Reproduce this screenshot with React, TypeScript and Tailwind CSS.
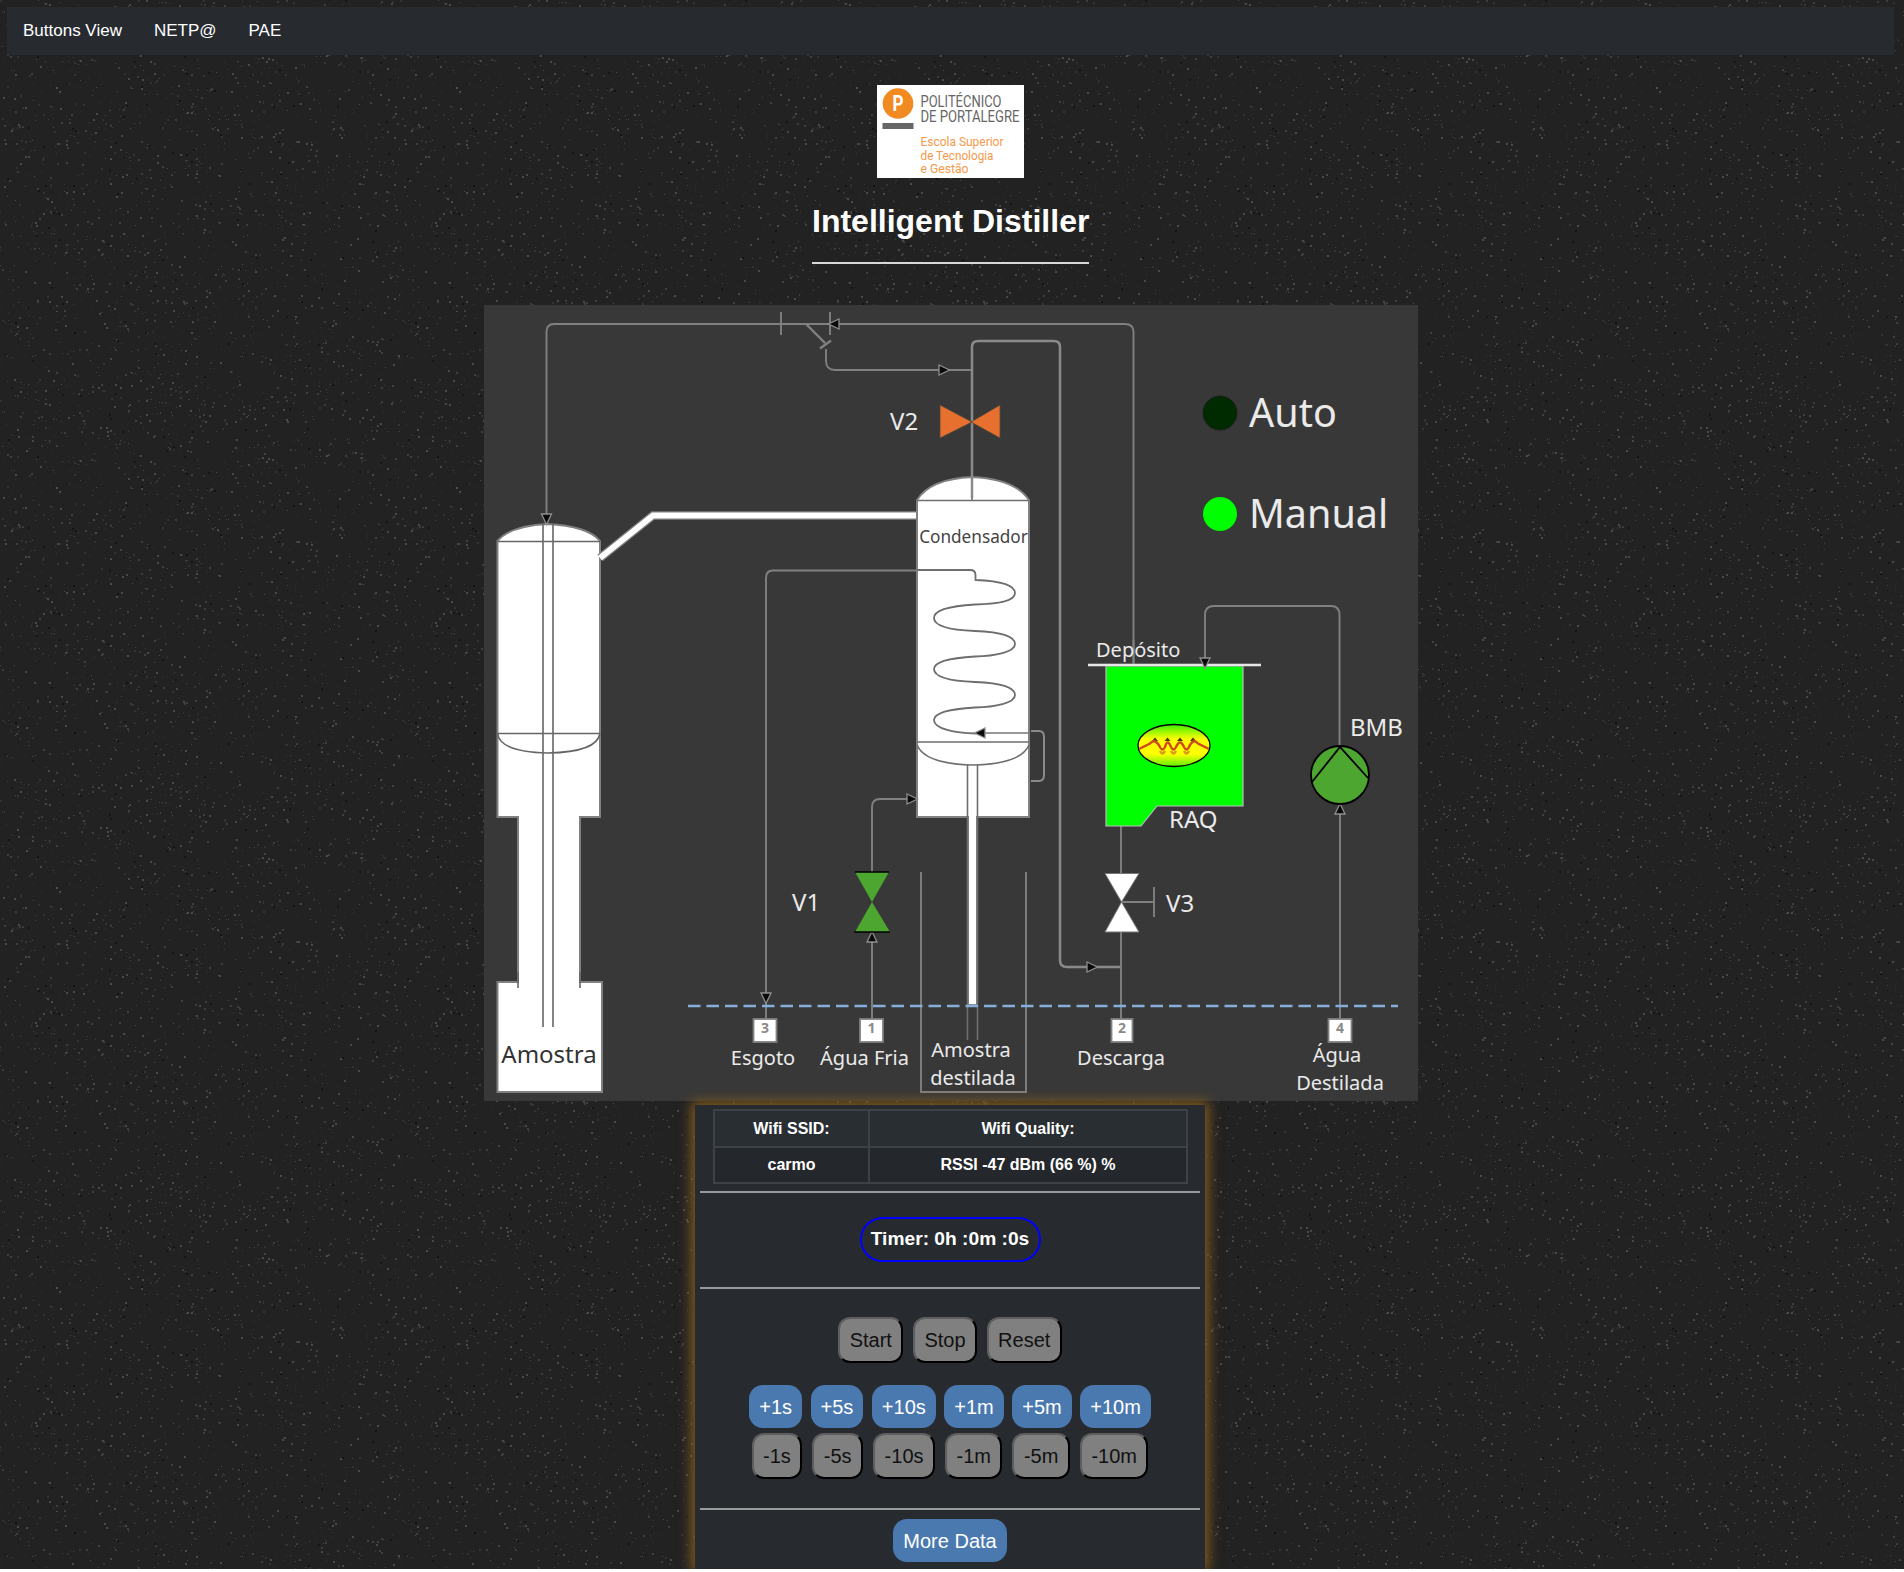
import * as React from "react";

const SANS = "font-['Liberation_Sans',Arial,sans-serif]";
const PIPE = "#808080";

// speckle for the page background, seeded so it stays the same on each load
function makeSpeckle() {
  let seed = 1337;
  const rnd = () => {
    seed = (seed * 16807) % 2147483647;
    return seed / 2147483647;
  };
  const dots: { x: number; y: number; s: number; c: string }[] = [];
  for (let i = 0; i < 2200; i++) {
    const r = rnd();
    dots.push({
      x: Math.floor(rnd() * 400),
      y: Math.floor(rnd() * 400),
      s: rnd() > 0.6 ? 2 : 1,
      c: r > 0.88 ? "#141414" : r > 0.6 ? "#4a4a4a" : r > 0.3 ? "#3e3e3e" : "#333333",
    });
  }
  return dots;
}

function Speckle() {
  const dots = React.useMemo(makeSpeckle, []);
  return (
    <svg className="absolute inset-0 w-full h-full" aria-hidden="true">
      <defs>
        <pattern id="speckle" width="400" height="400" patternUnits="userSpaceOnUse">
          {dots.map((d, i) => (
            <rect key={i} x={d.x} y={d.y} width={d.s} height={d.s} fill={d.c} />
          ))}
        </pattern>
      </defs>
      <rect width="100%" height="100%" fill="url(#speckle)" />
    </svg>
  );
}

function Logo() {
  const cond = { fontFamily: "Roboto, sans-serif" };
  return (
    <svg width="147" height="93" viewBox="0 0 147 93" className="block overflow-visible">
      <rect width="147" height="93" fill="#fff" />
      <circle cx="21" cy="18.5" r="15.3" fill="#f18a21" />
      <text x="21" y="26" textAnchor="middle" fontSize="22" fontWeight="700" fill="#fff" style={cond} textLength="11" lengthAdjust="spacingAndGlyphs">P</text>
      <rect x="5.5" y="38" width="31" height="6" fill="#666" />
      <g fill="#666" style={cond} fontSize="16">
        <text x="43.5" y="21.7" textLength="81" lengthAdjust="spacingAndGlyphs">POLITÉCNICO</text>
        <text x="43.5" y="37.3" textLength="99" lengthAdjust="spacingAndGlyphs">DE PORTALEGRE</text>
      </g>
      <g fill="#f5994a" style={cond} fontSize="13.5">
        <text x="43.5" y="61" textLength="83" lengthAdjust="spacingAndGlyphs">Escola Superior</text>
        <text x="43.5" y="74.5" textLength="73" lengthAdjust="spacingAndGlyphs">de Tecnologia</text>
        <text x="43.5" y="88" textLength="48" lengthAdjust="spacingAndGlyphs">e Gestão</text>
      </g>
    </svg>
  );
}

function Arrow({ x, y, dir }: { x: number; y: number; dir: "l" | "r" | "u" | "d" }) {
  const rot = { r: 0, d: 90, l: 180, u: 270 }[dir];
  return (
    <path
      d="M-5 -5 L5.5 0 L-5 5 Z"
      transform={`translate(${x} ${y}) rotate(${rot})`}
      fill="#0a0a0a"
      stroke="#8e8e8e"
      strokeWidth="1.3"
    />
  );
}

function Port({ x, w, n }: { x: number; w: number; n: string }) {
  return (
    <g>
      <rect x={x} y={1019} width={w} height={23} fill="#fff" stroke={PIPE} strokeWidth="1.8" />
      <text x={x + w / 2} y={1033} textAnchor="middle" fontSize="14" fontWeight="700" fill="#8a8a8a">{n}</text>
    </g>
  );
}

function Diagram() {
  return (
    <svg
      width="934"
      height="796"
      viewBox="484 305 934 796"
      className="block ml-[484px] mt-[41px] relative bg-[#383838]"
      style={{ fontFamily: "'Noto Sans', sans-serif" }}
    >
      <defs>
        <linearGradient id="heat" x1="0" y1="0" x2="0" y2="1">
          <stop offset="0" stopColor="#3bf000" />
          <stop offset="0.35" stopColor="#ffff00" />
          <stop offset="0.7" stopColor="#ffff00" />
          <stop offset="1" stopColor="#5ef000" />
        </linearGradient>
      </defs>

      {/* left column */}
      <path
        d="M497.5 541 Q510 526 547 524 Q588 526 600 541 L600 817 L580 817 L580 982 L602 982 L602 1092 L497.5 1092 L497.5 982 L518 982 L518 817 L497.5 817 Z"
        fill="#fff"
        stroke={PIPE}
        strokeWidth="2"
      />
      <g fill="none" stroke="#666" strokeWidth="1.6">
        <path d="M497.5 541.5 H600" />
        <path d="M543 524 V1027 M553 524 V1027" />
        <path d="M497.5 733.5 H600 M497.5 733.5 Q500 752 548 753 Q597 752 600 733.5" />
        <path d="M518 972 V988 M580 972 V988" />
      </g>

      {/* big vapour pipe */}
      <path d="M600 558 L653 515.5 H917" fill="none" stroke={PIPE} strokeWidth="8.5" />
      <path d="M600 558 L653 515.5 H917" fill="none" stroke="#fff" strokeWidth="6" />

      {/* condenser */}
      <path
        d="M917 500 Q930 479 972 477 Q1015 479 1029 500 V817 H977 V1005 H968 V817 H917 Z"
        fill="#fff"
        stroke={PIPE}
        strokeWidth="2"
      />
      <g fill="none" stroke="#6e6e6e" strokeWidth="1.6">
        <path d="M917 500.5 H1029" />
        <path d="M917 742 H1029 M917 745 Q925 764 973 765 Q1021 764 1029 745" />
        <path d="M967.5 765 V1040 M977.5 765 V1040" />
        <path d="M972 477 V500" />
        <path d="M917 570 H970 Q975.5 570 975.5 575 V580 C1000 581 1015 585 1015 593 C1015 602 995 604 975 604.5 C950 606 934 610 934 618 C934 626 950 630 975 631 C1000 632 1015 636 1015 644 C1015 652 995 656 975 656.5 C950 658 934 662 934 669 C934 677 950 681 975 682 C1000 683 1015 687 1015 695 C1015 703 995 707 975 707.5 C950 709 934 713 934 720 C934 729 955 733 976 733.5" strokeWidth="1.8" />
        <path d="M980 733 H1029" stroke="#777" />
        <path d="M1031 731 H1039 Q1044 731 1044 737 V775 Q1044 781 1039 781 H1031" stroke="#8a8a8a" strokeWidth="2" />
      </g>
      <text x="973.5" y="543" textAnchor="middle" fontSize="17.2" fill="#444">Condensador</text>

      {/* thin pipes */}
      <g fill="none" stroke={PIPE} strokeWidth="1.9">
        <path d="M546.5 516 V332 Q546.5 324 554 324 H1125 Q1133.5 324 1133.5 332 V665" />
        <path d="M781 312 V335 M830 312 V335" />
        <path d="M806 324 L825 343 M820 348.5 L831 340.5" strokeWidth="2.4" />
        <path d="M826 349 V361 Q826 370 835 370 H972" />
        <path d="M972 498 V347 Q972 341 978 341 H1054 Q1060 341 1060 347 V960 Q1060 967 1067 967 H1121" strokeWidth="2.5" stroke="#8a8a8a" />
        <path d="M766 993 V578 Q766 570.5 773 570.5 H917" />
        <path d="M872 1019 V933 M872 872 V807 Q872 799 880 799 H910" />
        <path d="M1121 826 V873 M1121 932 V1019 M1121 902 H1154 M1154 887 V917" />
        <path d="M1340 1019 V813 M1339.5 747 V615 Q1339.5 606 1331 606 H1214 Q1205 606 1205 615 V660" />
        <path d="M921 872 V1092 H1026 V872" />
        <path d="M766 1000 V1019" />
      </g>

      <Arrow x={834} y={324} dir="l" />
      <Arrow x={944} y={370} dir="r" />
      <Arrow x={546.5} y={519} dir="d" />
      <Arrow x={766} y={998} dir="d" />
      <Arrow x={872} y={937} dir="u" />
      <Arrow x={912} y={799} dir="r" />
      <Arrow x={1092} y={967} dir="r" />
      <Arrow x={980} y={733} dir="l" />
      <Arrow x={1340} y={809} dir="u" />

      {/* dashed water line */}
      <path d="M688 1006 H1398" stroke="#85aedb" strokeWidth="2.4" strokeDasharray="12.5 6" fill="none" />

      {/* valves */}
      <path d="M940 405 L972 422 L940 438 Z M1000 405 L971 422 L1000 438 Z" fill="#e8702e" stroke="#55463c" strokeWidth="0.8" />
      <path d="M855 872 H889 L872 902 L855 872 Z M872 902 L890 932 H855 Z" fill="#4ca62f" />
      <path d="M855 872 H889 M854 932 H890" stroke="#000" strokeWidth="1.5" />
      <path d="M1105 873.5 H1139 L1121.5 902 Z M1121.5 902 L1139 932 H1105 Z" fill="#fff" stroke="#777" strokeWidth="1" />

      {/* tank */}
      <path d="M1133.5 640 V665" stroke={PIPE} strokeWidth="1.9" />
      <path d="M1106 666 H1243 V806 H1157 L1141 826 H1106 Z" fill="#00ff00" stroke="#bdbdbd" strokeWidth="1.2" />
      <path d="M1088 665 H1261" stroke="#9a9a9a" strokeWidth="3" />
      <path d="M1088 665 H1261" stroke="#fff" strokeWidth="1.4" />
      <Arrow x={1205} y={663} dir="d" />

      {/* heater */}
      <ellipse cx="1174" cy="745.5" rx="36" ry="21" fill="url(#heat)" stroke="#000" strokeWidth="1.3" />
      <path d="M1152 741 L1155 737.5 L1158 741 Z M1164.5 741 L1167.5 737.5 L1170.5 741 Z M1177 741 L1180 737.5 L1183 741 Z M1190 741 L1193 737.5 L1196 741 Z" fill="#4a3a12" />
      <path d="M1160 751 Q1162.5 756 1165 751 M1171 751 Q1173.5 756 1176 751 M1184 751 Q1186.5 756 1189 751" fill="none" stroke="#d89a1c" strokeWidth="2.5" />
      <path d="M1139 749 L1150 743.5 Q1155 737.5 1160 747 Q1162.5 752 1165 747 Q1167.5 738 1171 747 Q1173.5 752 1176 747 Q1180 738 1184 747 Q1186.5 752 1189 747 Q1193 738 1198 743.5 L1209 749" fill="none" stroke="#cf4a1c" strokeWidth="2.4" />

      {/* pump */}
      <circle cx="1340" cy="775" r="29" fill="#4ca62f" stroke="#000" strokeWidth="1.8" />
      <path d="M1312 782 L1340 747 L1368 778" fill="none" stroke="#000" strokeWidth="1.8" />

      <circle cx="1220" cy="413" r="17" fill="#002a00" stroke="#1f1f1f" />
      <circle cx="1220" cy="514" r="17" fill="#00ff00" />

      <Port x={753.5} w={23} n="3" />
      <Port x={860} w={23} n="1" />
      <Port x={1111.5} w={21} n="2" />
      <Port x={1328.5} w={23} n="4" />

      {/* labels */}
      <g fill="#eaeaea">
        <text x="1249" y="427" fontSize="39.5">Auto</text>
        <text x="1249" y="528" fontSize="39.5">Manual</text>
        <text x="890" y="430" fontSize="24">V2</text>
        <text x="792" y="911" fontSize="24">V1</text>
        <text x="1166" y="912" fontSize="24">V3</text>
        <text x="1169" y="828" fontSize="24">RAQ</text>
        <text x="1350" y="736" fontSize="24">BMB</text>
        <text x="1096" y="657" fontSize="20">Depósito</text>
        <g fontSize="20" textAnchor="middle">
          <text x="763" y="1065">Esgoto</text>
          <text x="864.5" y="1065">Água Fria</text>
          <text x="971" y="1057">Amostra</text>
          <text x="973" y="1085">destilada</text>
          <text x="1121" y="1065">Descarga</text>
          <text x="1337" y="1062">Água</text>
          <text x="1340" y="1090">Destilada</text>
        </g>
      </g>
      <text x="549" y="1063" textAnchor="middle" fontSize="24" fill="#333">Amostra</text>
    </svg>
  );
}

function GrayButton({ children }: { children: React.ReactNode }) {
  return (
    <button className="h-[46px] px-[9.5px] border-2 rounded-[12px] bg-[#808080] text-[#111] text-[20px] border-t-[#5e5e5e] border-l-[#5e5e5e] border-r-black border-b-black">
      {children}
    </button>
  );
}

function BlueButton({ children }: { children: React.ReactNode }) {
  return (
    <button className="h-[43px] px-[10px] rounded-[14px] bg-[#4a79b0] text-white text-[20px]">
      {children}
    </button>
  );
}

function Rule() {
  return <hr className="mx-[5px] border-0 h-[2px] bg-[#9a9a9a]" />;
}

export default function App() {
  return (
    <div className={`relative bg-[#222222] overflow-hidden pt-[7px] ${SANS}`}>
      <Speckle />

      <nav className="relative ml-[7px] w-[1887px] h-[48px] bg-[#272b30] flex items-center pl-[16px] gap-[32px] text-white text-[17px]">
        <a>Buttons View</a>
        <a>NETP@</a>
        <a>PAE</a>
      </nav>

      <div className="relative ml-[877px] mt-[30px] w-[147px]">
        <Logo />
      </div>

      <div className="relative ml-[812px] mt-[25px] w-[277px]">
        <h1 className="text-[32px] leading-[37px] font-bold text-white whitespace-nowrap pb-[22px] border-b-2 border-[#d8d8d8]">
          Intelligent Distiller
        </h1>
      </div>

      <Diagram />

      <section className="relative ml-[695px] mt-[4px] w-[510px] h-[464px] bg-[#272b30] shadow-[0_0_12px_3px_#8a5f1c] text-white">
        <table className="ml-[18px] w-[475px] relative top-[4px] text-[16px] font-bold text-center border-collapse">
          <tbody>
            <tr className="h-[37px] bg-[#292e33]">
              <td className="w-[155px] border-2 border-[#3d4246]">Wifi SSID:</td>
              <td className="border-2 border-[#3d4246]">Wifi Quality:</td>
            </tr>
            <tr className="h-[36px] bg-[#24272b]">
              <td className="border-2 border-[#3d4246]">carmo</td>
              <td className="border-2 border-[#3d4246]">RSSI -47 dBm (66 %) %</td>
            </tr>
          </tbody>
        </table>

        <div className="mt-[11px]">
          <Rule />
        </div>

        <div className="flex justify-center mt-[24px]">
          <div className="w-[181px] h-[45px] rounded-[23px] border-2 border-[#0000ff] flex items-center justify-center text-[19.2px] font-bold">
            Timer: 0h :0m :0s
          </div>
        </div>

        <div className="mt-[25px]">
          <Rule />
        </div>

        <div className="flex justify-center gap-[9.5px] mt-[28px]">
          <GrayButton>Start</GrayButton>
          <GrayButton>Stop</GrayButton>
          <GrayButton>Reset</GrayButton>
        </div>

        <div className="flex justify-center gap-[8.5px] mt-[22px]">
          <BlueButton>+1s</BlueButton>
          <BlueButton>+5s</BlueButton>
          <BlueButton>+10s</BlueButton>
          <BlueButton>+1m</BlueButton>
          <BlueButton>+5m</BlueButton>
          <BlueButton>+10m</BlueButton>
        </div>

        <div className="flex justify-center gap-[10px] mt-[5px]">
          <GrayButton>-1s</GrayButton>
          <GrayButton>-5s</GrayButton>
          <GrayButton>-10s</GrayButton>
          <GrayButton>-1m</GrayButton>
          <GrayButton>-5m</GrayButton>
          <GrayButton>-10m</GrayButton>
        </div>

        <div className="mt-[29px]">
          <Rule />
        </div>

        <div className="flex justify-center mt-[9px]">
          <BlueButton>More Data</BlueButton>
        </div>
      </section>
    </div>
  );
}
